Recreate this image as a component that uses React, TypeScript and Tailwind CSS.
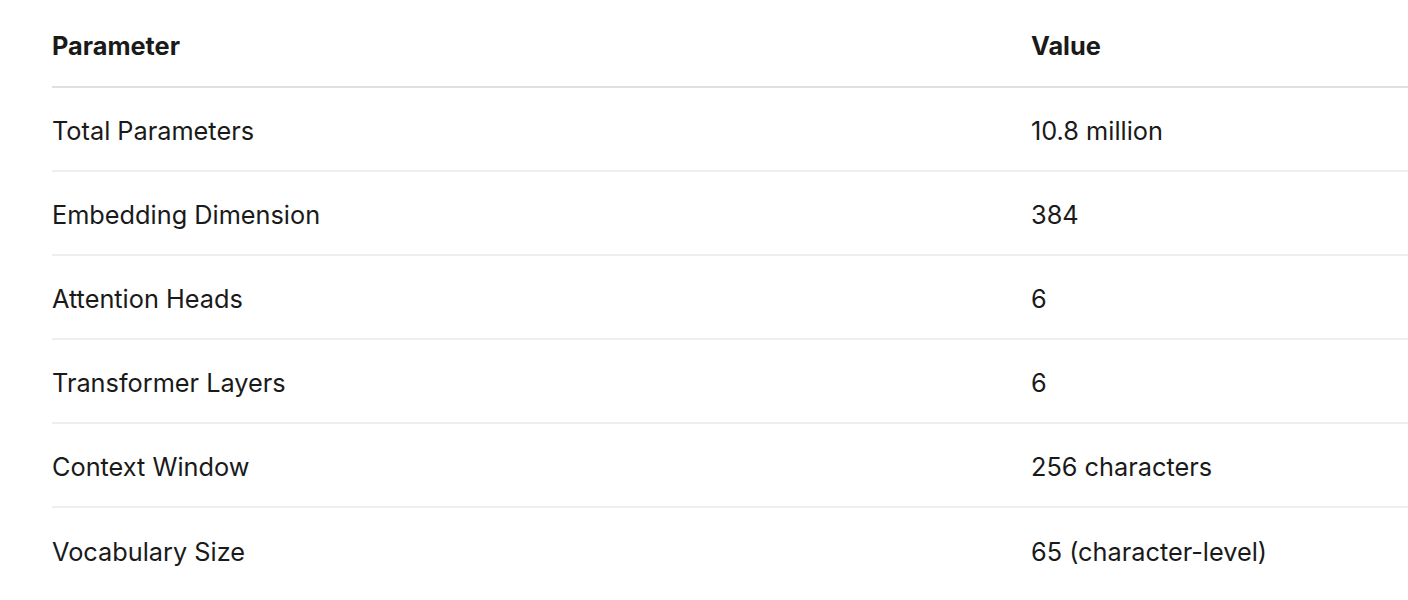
import React from "react";

const rows: [string, string][] = [
  ["Total Parameters", "10.8 million"],
  ["Embedding Dimension", "384"],
  ["Attention Heads", "6"],
  ["Transformer Layers", "6"],
  ["Context Window", "256 characters"],
  ["Vocabulary Size", "65 (character-level)"],
];

export default function App() {
  return (
    <div
      className="w-[1408px] h-[600px] bg-white overflow-hidden text-[#1a1a1a]"
      style={{ fontFamily: "Inter, 'Noto Sans', sans-serif" }}
    >
      <div className="ml-[52px] w-[1400px]">
        <div className="grid grid-cols-[979px_1fr] h-[88px] items-center border-b-2 border-[#e0e0e0] pt-[6px]">
          <div className="text-[25.3px] font-bold">Parameter</div>
          <div className="text-[25.3px] font-bold">Value</div>
        </div>
        {rows.map(([k, v], i) => (
          <div
            key={k}
            className={
              "grid grid-cols-[979px_1fr] h-[84px] items-center text-[25.3px] pt-[3px] " +
              (i < rows.length - 1 ? "border-b-2 border-[#eeeeee]" : "")
            }
          >
            <div>{k}</div>
            <div>{v}</div>
          </div>
        ))}
      </div>
    </div>
  );
}
